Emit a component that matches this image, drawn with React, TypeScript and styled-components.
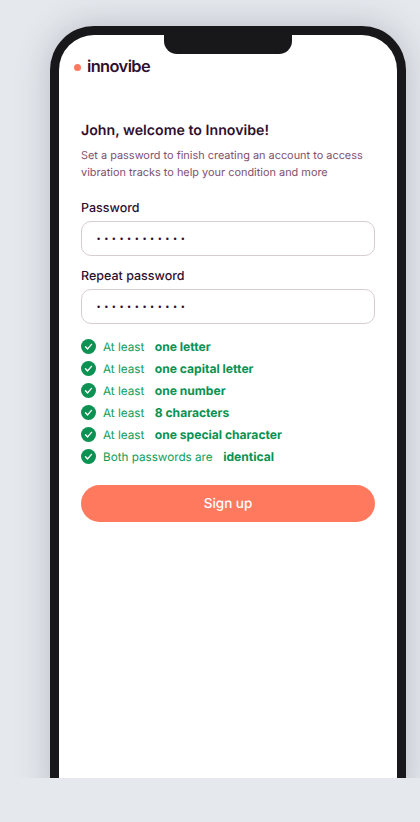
import React from 'react';
import styled, { createGlobalStyle } from 'styled-components';

const GlobalStyle = createGlobalStyle`
  html, body {
    margin: 0;
    padding: 0;
    background: #e5e8ed;
  }

  * {
    box-sizing: border-box;
  }
`;

const Stage = styled.main`
  height: 778px;
  overflow: hidden;
  padding: 26px 14px 0 50px;
  background: #e5e8ed;
  font-family: Inter, "Liberation Sans", sans-serif;
  text-rendering: geometricPrecision;
  -webkit-font-smoothing: antialiased;
`;

const Phone = styled.div`
  position: relative;
  width: 356px;
  height: 800px;
  padding: 9px;
  border-radius: 44px;
  background: #18181b;
  box-shadow: 0 0 34px rgba(60, 66, 80, 0.26);
`;

const Notch = styled.div`
  position: absolute;
  top: 8px;
  left: 114px;
  width: 128px;
  height: 20px;
  border-radius: 0 0 13px 13px;
  background: #18181b;
`;

const Screen = styled.div`
  height: 100%;
  padding: 18px 22px 0;
  border-radius: 35px;
  background: #fff;
`;

const Logo = styled.div`
  display: flex;
  align-items: center;
  gap: 6px;
  height: 26px;
  margin-left: -7px;
  color: #2f0f2f;
  font-size: 16.4px;
  font-weight: 600;
  letter-spacing: -0.6px;
`;

const LogoDot = styled.span`
  width: 7px;
  height: 7px;
  margin-top: 2px;
  border-radius: 50%;
  background: #ff795f;
`;

const Title = styled.h1`
  margin: 41px 0 0;
  color: #2f0f2f;
  font-size: 14.2px;
  font-weight: 600;
  line-height: 22px;
`;

const Intro = styled.p`
  margin: 5px 0 0;
  color: #7e4f70;
  font-size: 10.9px;
  line-height: 17px;
  letter-spacing: 0.01px;
`;

const Field = styled.label<{ $first?: boolean }>`
  display: block;
  margin-top: ${({ $first }) => ($first ? '17px' : '10px')};
  color: #2f0f2f;
  font-size: 12.5px;
  font-weight: 500;
  line-height: 22px;
`;

const PasswordInput = styled.input`
  display: block;
  width: 100%;
  height: 35px;
  margin-top: 1px;
  padding: 0 15px;
  border: 1px solid #d5cdd2;
  border-radius: 10px;
  outline: none;
  background: #fff;
  color: #2f0f2f;
  font-family: "Liberation Sans", sans-serif;
  font-size: 9px;
  letter-spacing: 4.5px;
`;

const Checks = styled.ul`
  display: flex;
  flex-direction: column;
  gap: 4px;
  margin: 13px 0 0;
  padding: 0;
  list-style: none;
`;

const Check = styled.li`
  display: flex;
  align-items: center;
  gap: 7px;
  height: 18px;
  color: #0f9d58;
  font-size: 11.7px;
`;

const Tick = styled.svg`
  flex: none;
  width: 15px;
  height: 15px;
`;

const Strong = styled.b`
  margin-left: 10.5px;
  color: #0b9252;
  font-size: 12.1px;
  font-weight: 700;
`;

const SignUp = styled.button`
  display: block;
  width: 100%;
  height: 37px;
  margin-top: 20px;
  border: 0;
  border-radius: 19px;
  background: #ff795f;
  color: #fff;
  font-family: inherit;
  font-size: 13.5px;
  font-weight: 500;
  text-rendering: geometricPrecision;
`;

const rules = [
  ['At least', 'one letter'],
  ['At least', 'one capital letter'],
  ['At least', 'one number'],
  ['At least', '8 characters'],
  ['At least', 'one special character'],
  ['Both passwords are', 'identical'],
];

const App: React.FC = () => (
  <Stage>
    <GlobalStyle />
    <Phone>
      <Notch />
      <Screen>
        <Logo>
          <LogoDot />
          innovibe
        </Logo>
        <Title>John, welcome to Innovibe!</Title>
        <Intro>
          Set a password to finish creating an account to access vibration tracks to help your condition and more
        </Intro>
        <Field $first>
          Password
          <PasswordInput type="password" value="password1234" readOnly />
        </Field>
        <Field>
          Repeat password
          <PasswordInput type="password" value="password1234" readOnly />
        </Field>
        <Checks>
          {rules.map(([text, bold]) => (
            <Check key={bold}>
              <Tick viewBox="0 0 15 15">
                <circle cx="7.5" cy="7.5" r="7.5" fill="#0b9252" />
                <path d="M4.5 7.8l2.1 2.1 3.9-4.5" fill="none" stroke="#fff" strokeWidth="1.4" strokeLinecap="round" strokeLinejoin="round" />
              </Tick>
              <span>
                {text}
                <Strong>{bold}</Strong>
              </span>
            </Check>
          ))}
        </Checks>
        <SignUp type="button">Sign up</SignUp>
      </Screen>
    </Phone>
  </Stage>
);

export default App;
